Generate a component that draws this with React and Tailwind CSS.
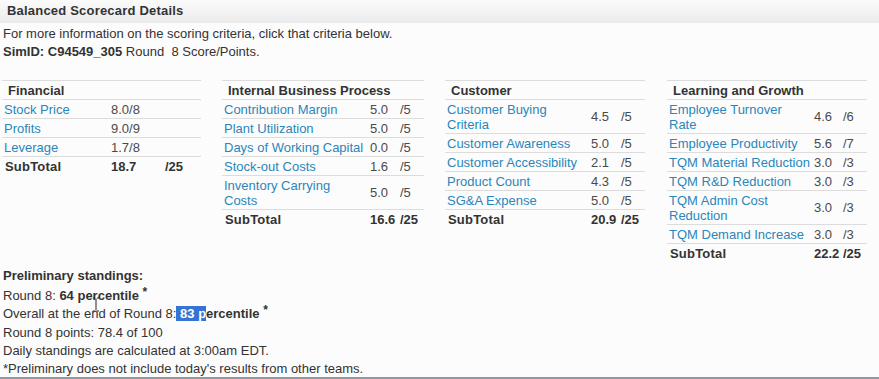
import React from "react";

const tables = [
  {
    title: "Financial",
    w: "w-[199px]",
    cols: "grid-cols-[106px_54px_39px]",
    rows: [
      { n: ["Stock Price"], v: "8.0/8", d: "" },
      { n: ["Profits"], v: "9.0/9", d: "" },
      { n: ["Leverage"], v: "1.7/8", d: "" },
    ],
    sub: { v: "18.7", d: "/25" },
  },
  {
    title: "Internal Business Process",
    w: "w-[202px]",
    cols: "grid-cols-[145px_30px_27px]",
    rows: [
      { n: ["Contribution Margin"], v: "5.0", d: "/5" },
      { n: ["Plant Utilization"], v: "5.0", d: "/5" },
      { n: ["Days of Working Capital"], v: "0.0", d: "/5" },
      { n: ["Stock-out Costs"], v: "1.6", d: "/5" },
      { n: ["Inventory Carrying", "Costs"], v: "5.0", d: "/5" },
    ],
    sub: { v: "16.6", d: "/25" },
  },
  {
    title: "Customer",
    w: "w-[200px]",
    cols: "grid-cols-[143px_30px_27px]",
    rows: [
      { n: ["Customer Buying", "Criteria"], v: "4.5", d: "/5" },
      { n: ["Customer Awareness"], v: "5.0", d: "/5" },
      { n: ["Customer Accessibility"], v: "2.1", d: "/5" },
      { n: ["Product Count"], v: "4.3", d: "/5" },
      { n: ["SG&A Expense"], v: "5.0", d: "/5" },
    ],
    sub: { v: "20.9", d: "/25" },
  },
  {
    title: "Learning and Growth",
    w: "w-[200px]",
    cols: "grid-cols-[144px_29px_27px]",
    rows: [
      { n: ["Employee Turnover", "Rate"], v: "4.6", d: "/6" },
      { n: ["Employee Productivity"], v: "5.6", d: "/7" },
      { n: ["TQM Material Reduction"], v: "3.0", d: "/3" },
      { n: ["TQM R&D Reduction"], v: "3.0", d: "/3" },
      { n: ["TQM Admin Cost", "Reduction"], v: "3.0", d: "/3" },
      { n: ["TQM Demand Increase"], v: "3.0", d: "/3" },
    ],
    sub: { v: "22.2", d: "/25" },
  },
];

function ScoreTable({ t }) {
  return (
    <div className={`${t.w} flex flex-col`}>
      <div className="border-t border-[#dcdcdc] pl-[6px] pt-[2px] pb-[1px] leading-[15px] font-bold text-[#333]">
        {t.title}
      </div>
      {t.rows.map((r, i) => (
        <div
          key={i}
          className={`grid ${t.cols} items-center border-t border-[#dcdcdc]`}
        >
          <div className="pl-[2px] pt-[2px] pb-[1px] leading-[15px] whitespace-nowrap text-[#2a86bb]">
            {r.n.map((line, j) => (
              <div key={j}>{line}</div>
            ))}
          </div>
          <div className="pl-[3px] leading-[15px] whitespace-nowrap text-[#4a4a4a]">
            {r.v}
          </div>
          <div className="pl-[3px] leading-[15px] whitespace-nowrap text-[#4a4a4a]">
            {r.d}
          </div>
        </div>
      ))}
      <div
        className={`grid ${t.cols} items-center border-t border-[#dcdcdc] font-bold text-[#333]`}
      >
        <div className="pl-[3px] pt-[2px] pb-[1px] leading-[15px] whitespace-nowrap tracking-[0.2px]">
          SubTotal
        </div>
        <div className="pl-[3px] leading-[15px] whitespace-nowrap">{t.sub.v}</div>
        <div className="pl-[3px] leading-[15px] whitespace-nowrap">{t.sub.d}</div>
      </div>
    </div>
  );
}

export default function App() {
  return (
    <div className="relative flex h-[379px] w-[879px] flex-col bg-[#fcfcfc] font-['Liberation_Sans',Arial,sans-serif] text-[13px] text-[#333]">
      <div className="min-h-0 flex-1 overflow-hidden">
        <div className="flex h-[23px] items-center bg-linear-to-b from-[#fbfbfb] to-[#ebebeb] pb-[2px] pl-[7px] text-[13px] font-bold tracking-[0.2px] text-[#333]">
          Balanced Scorecard Details
        </div>
        <div className="pl-[3px] leading-[18px]">
          <div className="mt-[2px]">
            For more information on the scoring criteria, click that criteria below.
          </div>
          <div>
            <span className="font-bold">SimID: C94549_305</span> Round&nbsp; 8 Score/Points.
          </div>
        </div>

        <div className="ml-[2px] mt-[19px] flex items-start gap-[21px]">
          <ScoreTable t={tables[0]} />
          <ScoreTable t={tables[1]} />
          <ScoreTable t={tables[2]} />
          <div className="ml-[1px]">
            <ScoreTable t={tables[3]} />
          </div>
        </div>

        <div className="mt-[5px] pl-[3px] leading-[18px]">
          <div className="font-bold">Preliminary standings:</div>
          <div className="mt-[2px]">
            Round 8: <span className="font-bold">64 percentile</span>{" "}
            <span className="relative -top-[4px] text-[12px] font-bold">*</span>
          </div>
          <div>
            Overall at the end of Round 8:
            <span className="bg-[#3574d4] font-bold text-white"> 83 p</span>
            <span className="font-bold">ercentile</span>{" "}
            <span className="relative -top-[4px] text-[12px] font-bold">*</span>
          </div>
          <div className="mt-[1px]">Round 8 points: 78.4 of 100</div>
          <div>Daily standings are calculated at 3:00am EDT.</div>
          <div>*Preliminary does not include today's results from other teams.</div>
        </div>
      </div>
      <div className="h-[2px] bg-[#8f989e]" />

      <svg
        className="absolute left-[92px] top-[297px]"
        width="8"
        height="15"
        viewBox="0 0 8 15"
      >
        <path
          d="M1 1 H3 M5 1 H7 M4 1.5 V13.5 M1 14 H3 M5 14 H7"
          stroke="#222"
          strokeWidth="1"
          fill="none"
        />
      </svg>
    </div>
  );
}
